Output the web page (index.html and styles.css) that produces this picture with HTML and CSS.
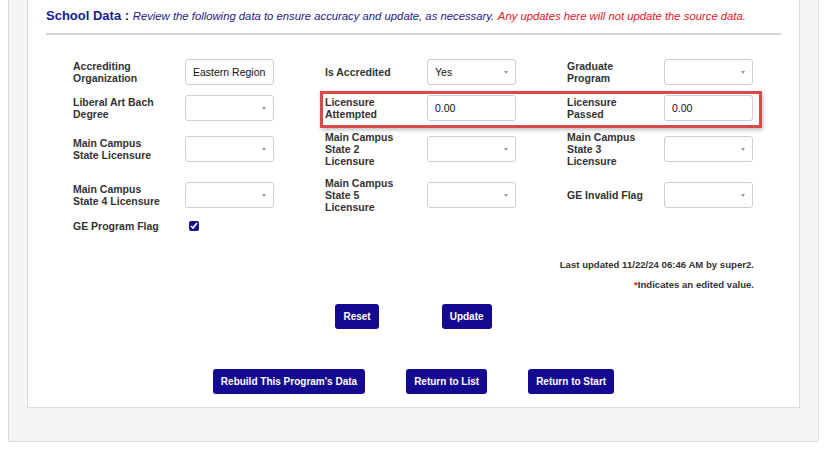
FILE: index.html
```html
<!DOCTYPE html>
<html lang="en">
<head>
    <meta charset="UTF-8">
    <meta name="viewport" content="width=device-width, initial-scale=1.0">
    <title>School Data</title>
    <link rel="stylesheet" href="styles.css">
</head>
<body>
    <div class="outer-panel">
        <div class="panel">
            <h2 class="section-title">School Data <span class="sep">:</span> <em class="note">Review the following data to ensure accuracy and update, as necessary.</em> <em class="warn">Any updates here will not update the source data.</em></h2>
            <hr class="rule">

            <div class="fields">
                <div class="field"><label>Accrediting Organization</label><input type="text" class="box" value="Eastern Region"></div>
                <div class="field"><label>Is Accredited</label><span class="sel"><select class="box"><option>Yes</option></select></span></div>
                <div class="field"><label>Graduate Program</label><span class="sel"><select class="box"><option></option></select></span></div>

                <div class="field"><label>Liberal Art Bach Degree</label><span class="sel"><select class="box"><option></option></select></span></div>
                <div class="field"><label>Licensure Attempted</label><input type="text" class="box" value="0.00"></div>
                <div class="field"><label>Licensure Passed</label><input type="text" class="box" value="0.00"></div>

                <div class="field"><label>Main Campus State Licensure</label><span class="sel"><select class="box"><option></option></select></span></div>
                <div class="field"><label>Main Campus State 2 Licensure</label><span class="sel"><select class="box"><option></option></select></span></div>
                <div class="field"><label>Main Campus State 3 Licensure</label><span class="sel"><select class="box"><option></option></select></span></div>

                <div class="field"><label>Main Campus State 4 Licensure</label><span class="sel"><select class="box"><option></option></select></span></div>
                <div class="field"><label>Main Campus State 5 Licensure</label><span class="sel"><select class="box"><option></option></select></span></div>
                <div class="field"><label>GE Invalid Flag</label><span class="sel"><select class="box"><option></option></select></span></div>

                <div class="field flag"><label>GE Program Flag</label><input type="checkbox" class="check" checked></div>

                <div class="highlight"></div>
            </div>

            <p class="meta first">Last updated 11/22/24 06:46 AM by super2.</p>
            <p class="meta"><span class="star">*</span>Indicates an edited value.</p>

            <div class="actions">
                <button type="button" class="btn">Reset</button>
                <button type="button" class="btn">Update</button>
            </div>
            <div class="actions nav">
                <button type="button" class="btn">Rebuild This Program's Data</button>
                <button type="button" class="btn">Return to List</button>
                <button type="button" class="btn">Return to Start</button>
            </div>
        </div>
    </div>
</body>
</html>
```

FILE: styles.css
```css
body {
    font-family: "Liberation Sans", Arial, sans-serif;
    background: #ffffff;
    margin: 0 8px;
    color: #333;
}
.outer-panel {
    background: #f5f5f5;
    border: 1px solid #dcdcdc;
    border-top: none;
    border-radius: 0 0 3px 3px;
    padding: 0 18px 33px;
}
.panel {
    background: #ffffff;
    border: 1px solid #dcdcdc;
    border-top: none;
    padding: 8px 18px 13px;
}
.section-title {
    margin: 0;
    font-size: 13px;
    line-height: 16px;
    color: #1c1a8a;
    font-weight: bold;
}
.section-title em {
    font-size: 11.3px;
    font-weight: normal;
}
.section-title .note {
    color: #1c1a8a;
}
.section-title .warn {
    color: #e8141c;
}
.rule {
    border: none;
    border-top: 2px solid #d4d4d4;
    margin: 9px 0 0;
}
.fields {
    position: relative;
    margin: 24px 27px 0;
    display: grid;
    grid-template-columns: 201px 191px 186px;
    column-gap: 51px;
    row-gap: 10px;
    align-items: center;
}
.field {
    display: flex;
    align-items: center;
}
.field.flag {
    margin-top: -3px;
}
.field label {
    flex: none;
    box-sizing: border-box;
    font-size: 10.5px;
    line-height: 12px;
    font-weight: bold;
    color: #333;
}
.field:nth-child(3n+1) label { width: 112px; padding-right: 20px; }
.field:nth-child(3n+2) label { width: 102px; padding-right: 22px; }
.field:nth-child(3n) label { width: 97px; padding-right: 17px; }
.box {
    box-sizing: border-box;
    width: 89px;
    height: 26px;
    border: 1px solid #cfcfcf;
    border-radius: 3px;
    background: #fff;
    padding: 0 7px;
    font-family: inherit;
    font-size: 10.5px;
    color: #111;
    outline: none;
}
.sel {
    position: relative;
    display: block;
}
.sel select {
    appearance: none;
    -webkit-appearance: none;
}
.sel::after {
    content: "";
    position: absolute;
    right: 8px;
    top: 12px;
    border-left: 2.5px solid transparent;
    border-right: 2.5px solid transparent;
    border-top: 3px solid #999;
}
.check {
    width: 10px;
    height: 10px;
    margin: 0 0 0 4px;
    accent-color: #1a0f8c;
}
.highlight {
    position: absolute;
    left: 247px;
    top: 32px;
    width: 442px;
    height: 37px;
    box-sizing: border-box;
    border: 3px solid #d94b4b;
    box-shadow: 1px 2px 4px rgba(0, 0, 0, 0.25);
    pointer-events: none;
}
.meta {
    margin: 0 27px;
    text-align: right;
    font-size: 9.6px;
    line-height: 14px;
    font-weight: bold;
    color: #333;
}
.meta.first {
    margin-top: 26px;
    margin-bottom: 6px;
}
.star {
    color: #e8141c;
}
.actions {
    display: flex;
    justify-content: center;
    gap: 63px;
    margin-top: 12px;
}
.actions.nav {
    gap: 41px;
    margin-top: 40px;
}
.btn {
    height: 25px;
    padding: 0 8px;
    background: #140a92;
    color: #fff;
    border: none;
    border-radius: 3px;
    font-family: inherit;
    font-size: 10px;
    font-weight: bold;
    cursor: pointer;
}
.btn:hover {
    background: #0a0670;
}
```
